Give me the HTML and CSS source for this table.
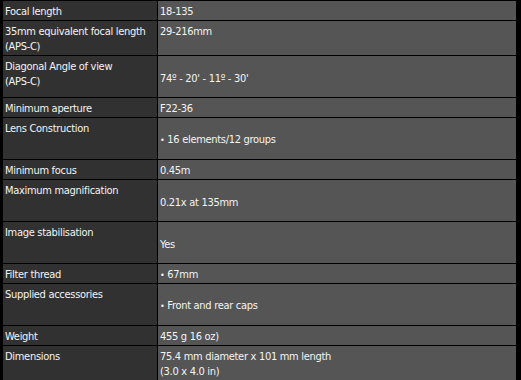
FILE: index.html
```html
<!DOCTYPE html>
<html>
<head>
<meta charset="utf-8">
<link rel="stylesheet" href="styles.css">
</head>
<body>
<table class="specs">
  <tr class="r-s"><td class="lbl">Focal length</td><td class="val">18-135</td></tr>
  <tr class="r-m"><td class="lbl">35mm equivalent focal length (APS-C)</td><td class="val top">29-216mm</td></tr>
  <tr class="r-l"><td class="lbl">Diagonal Angle of view<br>(APS-C)</td><td class="val">74º - 20' - 11º - 30'</td></tr>
  <tr class="r-s"><td class="lbl">Minimum aperture</td><td class="val">F22-36</td></tr>
  <tr class="r-l"><td class="lbl">Lens Construction</td><td class="val"><span class="dot">•</span> 16 elements/12 groups</td></tr>
  <tr class="r-s"><td class="lbl">Minimum focus</td><td class="val">0.45m</td></tr>
  <tr class="r-l"><td class="lbl">Maximum magnification</td><td class="val">0.21x at 135mm</td></tr>
  <tr class="r-l"><td class="lbl">Image stabilisation</td><td class="val">Yes</td></tr>
  <tr class="r-s"><td class="lbl">Filter thread</td><td class="val"><span class="dot">•</span> 67mm</td></tr>
  <tr class="r-l"><td class="lbl">Supplied accessories</td><td class="val"><span class="dot">•</span> Front and rear caps</td></tr>
  <tr class="r-s"><td class="lbl">Weight</td><td class="val">455 g 16 oz)</td></tr>
  <tr class="r-m"><td class="lbl">Dimensions</td><td class="val top">75.4 mm diameter x 101 mm length<br>(3.0 x 4.0 in)</td></tr>
</table>
</body>
</html>
```

FILE: styles.css
```css
html, body {
  margin: 0;
  padding: 0;
  background: #000;
}
body {
  font-family: "DejaVu Sans Condensed", "DejaVu Sans", sans-serif;
  font-stretch: condensed;
  font-size: 11px;
  line-height: 15px;
  letter-spacing: -0.3px;
  color: #f4f4f4;
}
.specs {
  border-collapse: separate;
  border-spacing: 1px;
  margin-left: 2px;
  width: 515px;
  table-layout: fixed;
}
.specs td {
  padding: 3px 2px 0 2px;
  box-sizing: border-box;
}
.lbl {
  width: 154px;
  background: #313131;
  vertical-align: top;
}
.val {
  background: #555555;
  vertical-align: middle;
  padding-left: 3px;
  padding-top: 0;
}
.val.top {
  vertical-align: top;
  padding-top: 3px;
}
.r-s { height: 19px; }
.r-m { height: 34px; }
.r-l { height: 41px; }
.r-s .val { padding-top: 3px; vertical-align: top; }
.dot { font-size: 9px; }
```
